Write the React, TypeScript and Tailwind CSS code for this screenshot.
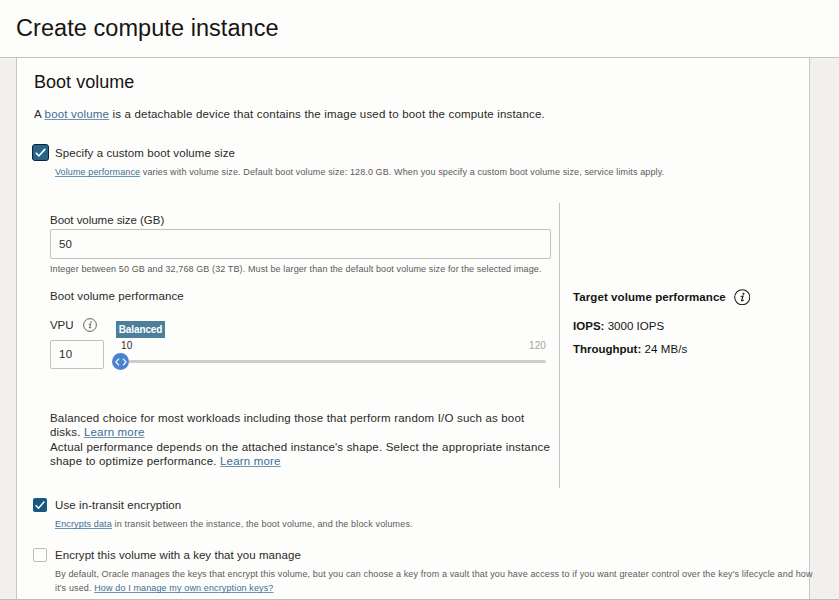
import type { ReactNode } from "react";

const LINK = "text-[#3b6e94] underline decoration-[#6f94b0] decoration-1 underline-offset-1 [text-decoration-skip-ink:none]";

function Link({ children }: { children: ReactNode }) {
  return <a className={LINK}>{children}</a>;
}

function Info({ className }: { className: string }) {
  return (
    <svg viewBox="0 0 16 16" className={className} fill="none" stroke="currentColor">
      <circle cx="8" cy="8" r="7.3" strokeWidth="1" />
      <circle cx="9.2" cy="4.6" r="0.95" fill="currentColor" stroke="none" />
      <path d="M6.5 7.4Q7.6 6.9 8.8 6.8L7.4 11Q7.1 12.1 9.4 10.7" strokeWidth="1.05" />
    </svg>
  );
}

function Check({ className }: { className: string }) {
  return (
    <svg viewBox="0 0 14 14" className={className} fill="none" stroke="#fff" strokeWidth="1.5">
      <path d="M2.6 7.2 5.5 10.2 11.4 3.6" />
    </svg>
  );
}

export default function App() {
  return (
    <div className="flex h-[600px] w-[839px] flex-col overflow-hidden border-b border-[#bdbbb8] bg-[#f2f0ef] font-['Liberation_Sans',Arial,sans-serif] text-[#2b2927]">
      <header className="h-[58px] shrink-0 border-b border-[#c9c3c0] bg-[#fdfdfc] pl-4 pt-3">
        <h1 className="whitespace-nowrap text-[23.5px] leading-8 tracking-[0.06px] text-[#161513]">Create compute instance</h1>
      </header>
      <main className="ml-4 w-[794px] flex-1 whitespace-nowrap border-x border-[#c9c6c4] bg-[#fdfdfc] pl-4 pt-3 text-[11.5px] leading-4 tracking-[0.09px]">
        <h2 className="pl-[1px] text-[18px] leading-6 tracking-[0.02px] text-[#161513]">Boot volume</h2>
        <p className="mt-3 pl-[1px] tracking-[0.175px]">
          A <Link>boot volume</Link> is a detachable device that contains the image used to boot the compute instance.
        </p>

        <div className="mt-[22px] flex items-center">
          <span className="-ml-[1px] flex size-[17px] shrink-0 items-center justify-center rounded-[3px] border-[1.5px] border-[#0b2440] bg-[#2c6488]">
            <Check className="size-[15px] shrink-0" />
          </span>
          <span className="ml-[6px]">Specify a custom boot volume size</span>
        </div>
        <p className="mt-[4px] pl-[22px] text-[9px] leading-[14px] tracking-[0.118px] text-[#5c5a57]">
          <Link>Volume performance</Link> varies with volume size. Default boot volume size: 128.0 GB. When you specify a custom boot volume size, service limits apply.
        </p>

        <div className="mt-6 flex h-[285px]">
          <section className="w-[527px] shrink-0 border-r border-[#c4c3c2] pl-[17px] pt-[9px]">
            <div className="tracking-[-0.04px]">Boot volume size (GB)</div>
            <div className="mt-[1px] h-[30px] w-[501px] rounded-[2px] border border-[#c3c1bf] pl-2 leading-7">50</div>
            <div className="mt-[3px] text-[9px] leading-[14px] tracking-[0.11px] text-[#5c5a57]">
              Integer between 50 GB and 32,768 GB (32 TB). Must be larger than the default boot volume size for the selected image.
            </div>
            <div className="mt-3">Boot volume performance</div>
            <div className="mt-[13px] flex">
              <div className="w-[54px]">
                <div className="flex w-16 items-center">
                  <span className="tracking-[-0.1px]">VPU</span>
                  <Info className="ml-[10px] size-[14px] text-[#4c4a48]" />
                </div>
                <div className="mt-[7px] h-[29px] rounded-[2px] border border-[#c3c1bf] pl-2 leading-[27px] tracking-[0.3px]">10</div>
              </div>
              <div className="ml-2 w-[434px] pt-[4px]">
                <div className="ml-[4px] h-[17px] w-[49px] bg-[#4d7f9b] text-center text-[10px] font-bold leading-[17px] tracking-[-0.1px] text-white">Balanced</div>
                <div className="ml-[9px] mt-[1px] flex justify-between text-[10px] leading-[14px]">
                  <span>10</span>
                  <span className="text-[#a5a3a1]">120</span>
                </div>
                <div className="flex h-[17px] items-center">
                  <span className="flex size-[17px] shrink-0 items-center justify-center rounded-full bg-[#4a84d0]">
                    <svg viewBox="0 0 16 16" className="size-4" fill="none" stroke="#fff" strokeWidth="1.1">
                      <path d="M6 4.7 2.9 8 6 11.3M10 4.7 13.1 8 10 11.3" />
                    </svg>
                  </span>
                  <span className="h-[3px] flex-1 rounded-r-sm bg-[#cfcbc7]" />
                </div>
              </div>
            </div>
            <p className="mt-[41px] leading-[14.25px] tracking-[0.185px]">
              Balanced choice for most workloads including those that perform random I/O such as boot
              <br />
              disks. <Link>Learn more</Link>
              <br />
              Actual performance depends on the attached instance's shape. Select the appropriate instance
              <br />
              shape to optimize performance. <Link>Learn more</Link>
            </p>
          </section>
          <aside className="pl-[13px] pt-[85px] text-[#161513]">
            <div className="flex h-[18px] items-center font-bold">
              Target volume performance
              <Info className="ml-2 size-[16.5px]" />
            </div>
            <div className="mt-[12px] tracking-[0.03px]"><b>IOPS:</b> 3000 IOPS</div>
            <div className="mt-[7px]"><b className="tracking-[-0.01px]">Throughput:</b> 24 MB/s</div>
          </aside>
        </div>

        <div className="mt-[9px] flex items-center">
          <span className="flex size-[14px] items-center justify-center rounded-[2px] bg-[#175780]">
            <Check className="size-[14px]" />
          </span>
          <span className="ml-2">Use in-transit encryption</span>
        </div>
        <p className="mt-1 pl-[22px] text-[9px] leading-[14px] tracking-[0.145px] text-[#5c5a57]">
          <Link>Encrypts data</Link> in transit between the instance, the boot volume, and the block volumes.
        </p>
        <div className="mt-4 flex items-center">
          <span className="size-[14px] rounded-[2px] border border-[#bebcba]" />
          <span className="ml-2 tracking-[0.05px]">Encrypt this volume with a key that you manage</span>
        </div>
        <p className="relative mt-1 pl-[22px] text-[9px] leading-[14px] tracking-[0.133px] text-[#5c5a57]">
          By default, Oracle manages the keys that encrypt this volume, but you can choose a key from a vault that you have access to if you want greater control over the key's lifecycle and how
          <br />
          it's used. <Link>How do I manage my own encryption keys?</Link>
        </p>
      </main>
    </div>
  );
}
